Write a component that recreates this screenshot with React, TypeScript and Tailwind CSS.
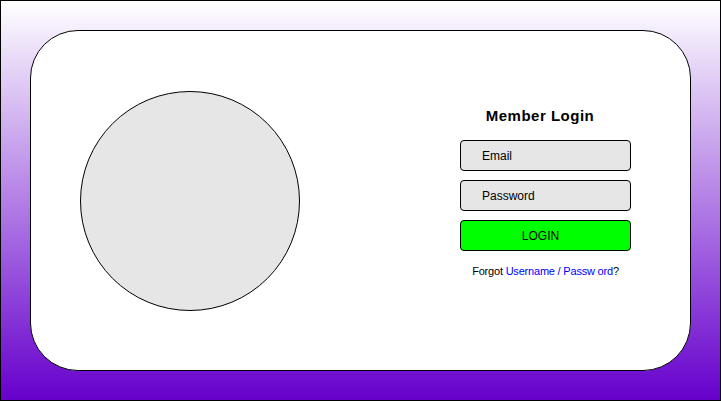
export default function App() {
  return (
    <div
      className="w-[721px] h-[401px] border border-black bg-[linear-gradient(to_bottom,#ffffff,#6600cc)] p-[29px]"
      style={{ fontFamily: '"Liberation Sans", Arial, sans-serif' }}
    >
      <div className="w-[661px] h-[341px] bg-white border border-black rounded-[48px] flex items-center">
        <div className="ml-[49px] w-[220px] h-[220px] rounded-full bg-[#e6e6e6] border border-black shrink-0" />
        <div className="ml-[160px] w-[171px] flex flex-col mb-[17px]">
          <div className="text-[15px] font-bold text-black text-center pr-[11px] leading-[18px] tracking-[0.5px]">Member Login</div>
          <div className="mt-[15px] h-[31px] rounded-[4px] border border-black bg-[#e6e6e6] flex items-center pl-[21px] pt-[2px] text-[12px] text-black">
            Email
          </div>
          <div className="mt-[9px] h-[31px] rounded-[4px] border border-black bg-[#e6e6e6] flex items-center pl-[21px] pt-[2px] text-[12px] text-black">
            Password
          </div>
          <button className="mt-[9px] h-[31px] rounded-[4px] border border-black bg-[#00ff00] flex items-center justify-center pr-[10px] pt-[2px] text-[12px] text-black">
            LOGIN
          </button>
          <div className="mt-[14px] text-[11px] text-black text-center leading-[13px] tracking-[-0.2px]">
            Forgot <span className="text-[#0000ff]">Username / Passw ord</span>?
          </div>
        </div>
      </div>
    </div>
  );
}
